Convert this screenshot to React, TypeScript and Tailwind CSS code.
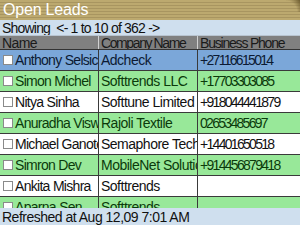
import React from "react";

type Row = { name: string; company: string; phone: string };

const rows: Row[] = [
  { name: "Anthony Selsick", company: "Adcheck", phone: "+27116615014" },
  { name: "Simon Michel", company: "Softtrends LLC", phone: "+17703303085" },
  { name: "Nitya Sinha", company: "Softtune Limited", phone: "+918044441879" },
  { name: "Anuradha Viswanathan", company: "Rajoli Textile", phone: "02653485697" },
  { name: "Michael Ganotes", company: "Semaphore Tech", phone: "+14401650518" },
  { name: "Simron Dev", company: "MobileNet Solutions", phone: "+914456879418" },
  { name: "Ankita Mishra", company: "Softtrends", phone: "" },
  { name: "Aparna Sen", company: "Softtrends", phone: "" },
];

function rowStyle(i: number) {
  if (i === 0) return "bg-[#7ba7d9] text-[#0c1a33]";
  if (i % 2 === 1) return "bg-[#98e899] text-[#0b3a0b]";
  return "bg-white text-[#111111]";
}

export default function App() {
  return (
    <div
      className="w-[300px] h-[225px] overflow-hidden flex flex-col bg-white"
      style={{ fontFamily: '"Liberation Sans", Arial, sans-serif' }}
    >
      <div className="relative h-[20px] shrink-0 flex items-center px-[3px] bg-[repeating-linear-gradient(to_bottom,#bca96f_0px,#bca96f_2px,#a89560_2px,#a89560_3px)]">
        <span className="text-white text-[16px] leading-none tracking-[-0.2px]">Open Leads</span>
        <div className="absolute right-0 top-0 w-[14px] h-[12px] bg-[radial-gradient(circle_at_0%_100%,transparent_60%,#6b5a2e_100%)]" />
      </div>
      <div className="h-[15px] shrink-0 flex items-center px-[2px] bg-[#cfdfee] text-[14px] leading-none tracking-[-0.8px] text-[#111]">
        Showing&nbsp;&nbsp;&lt;- 1 to 10 of 362 -&gt;
      </div>
      <div className="h-[15px] shrink-0 flex bg-[#808080] border-t border-[#b8c4d0] border-b border-b-[#333] text-[14px] leading-none text-[#1a1a1a]">
        <div className="w-[99px] pl-[2px] flex items-center border-r border-[#d0d0d0] whitespace-nowrap overflow-hidden tracking-[-0.6px]">Name</div>
        <div className="w-[99px] pl-[2px] flex items-center border-r border-[#d0d0d0] whitespace-nowrap overflow-hidden tracking-[-1.4px]">Company Name</div>
        <div className="flex-1 pl-[2px] flex items-center whitespace-nowrap overflow-hidden tracking-[-1.2px]">Business Phone</div>
      </div>
      <div className="flex-1 overflow-hidden">
        {rows.map((r, i) => (
          <div key={i} className={`h-[21px] flex border-b border-[#3a3a3a] text-[14px] leading-none ${rowStyle(i)}`}>
            <div className="w-[99px] flex items-center border-r border-[#3a3a3a] whitespace-nowrap overflow-hidden tracking-[-0.7px]">
              <span className="ml-[3px] mr-[2px] w-[10px] h-[10px] shrink-0 bg-white border border-[#8a8a8a]" />
              {r.name}
            </div>
            <div className="w-[99px] pl-[2px] flex items-center border-r border-[#3a3a3a] whitespace-nowrap overflow-hidden tracking-[-0.5px]">{r.company}</div>
            <div className="flex-1 pl-[2px] flex items-center whitespace-nowrap overflow-hidden tracking-[-1.7px]">{r.phone}</div>
          </div>
        ))}
      </div>
      <div className="h-[17px] shrink-0 flex items-center px-[2px] bg-[#cfdfee] text-[14px] leading-none tracking-[-0.5px] text-[#111]">
        Refreshed at Aug 12,09 7:01 AM
      </div>
    </div>
  );
}
